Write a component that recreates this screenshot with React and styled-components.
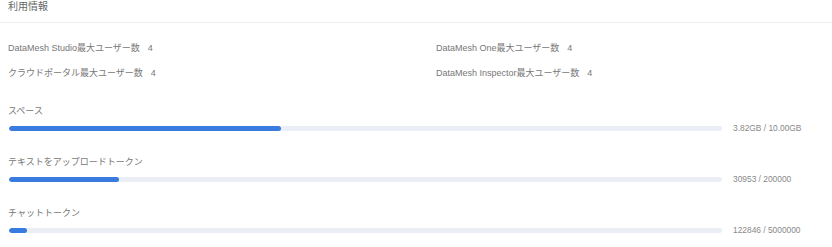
import React from "react";
import styled, { createGlobalStyle } from "styled-components";

const Global = createGlobalStyle`
  html, body { margin: 0; padding: 0; background: #fff; }
  body { font-family: "Liberation Sans", Arial, "Noto Sans CJK JP", sans-serif; }
`;

const Page = styled.div`
  padding: 0 8px 0 8px;
  width: 832px;
  box-sizing: border-box;
`;

const Header = styled.div`
  height: 21px;
  padding: 1px 8px 0 8px;
  border-bottom: 1px solid #eeeeee;
  margin: 0 -8px;
`;

const Title = styled.div`
  font-size: 10px;
  line-height: 12px;
  color: #666;
`;

const InfoGrid = styled.div`
  display: grid;
  grid-template-columns: 428px 1fr;
  row-gap: 13px;
  padding-top: 19px;
`;

const InfoItem = styled.div`
  font-size: 9px;
  line-height: 12px;
  color: #777;
  white-space: nowrap;
`;

const Count = styled.span`
  margin-left: 8px;
`;

const Usage = styled.div`
  display: flex;
  flex-direction: column;
  gap: 23px;
  margin-top: 26px;
`;

const Block = styled.div`
  display: flex;
  flex-direction: column;
  gap: 6px;
`;

const Label = styled.div`
  font-size: 9px;
  line-height: 12px;
  color: #777;
`;

const BarRow = styled.div`
  display: flex;
  align-items: center;
  height: 10px;
`;

const Track = styled.div`
  flex: 1;
  height: 5px;
  border-radius: 3px;
  background: #ebeef5;
  margin-left: 1px;
  overflow: hidden;
`;

const Fill = styled.div`
  height: 100%;
  border-radius: 3px;
  background: #3a7be0;
`;

const Value = styled.div`
  width: 91px;
  margin-left: 11px;
  font-size: 8.4px;
  line-height: 10px;
  color: #888;
  white-space: nowrap;
`;

const info = [
  "DataMesh Studio最大ユーザー数",
  "DataMesh One最大ユーザー数",
  "クラウドポータル最大ユーザー数",
  "DataMesh Inspector最大ユーザー数",
];

const usage = [
  { label: "スペース", used: 3.82, total: 10, text: "3.82GB / 10.00GB" },
  { label: "テキストをアップロードトークン", used: 30953, total: 200000, text: "30953 / 200000" },
  { label: "チャットトークン", used: 122846, total: 5000000, text: "122846 / 5000000" },
];

export default function App() {
  return (
    <>
      <Global />
      <Page>
        <Header>
          <Title>利用情報</Title>
        </Header>
        <InfoGrid>
          {info.map((t) => (
            <InfoItem key={t}>
              {t}
              <Count>4</Count>
            </InfoItem>
          ))}
        </InfoGrid>
        <Usage>
          {usage.map((u) => (
            <Block key={u.label}>
              <Label>{u.label}</Label>
              <BarRow>
                <Track>
                  <Fill style={{ width: `${(u.used / u.total) * 100}%` }} />
                </Track>
                <Value>{u.text}</Value>
              </BarRow>
            </Block>
          ))}
        </Usage>
      </Page>
    </>
  );
}
